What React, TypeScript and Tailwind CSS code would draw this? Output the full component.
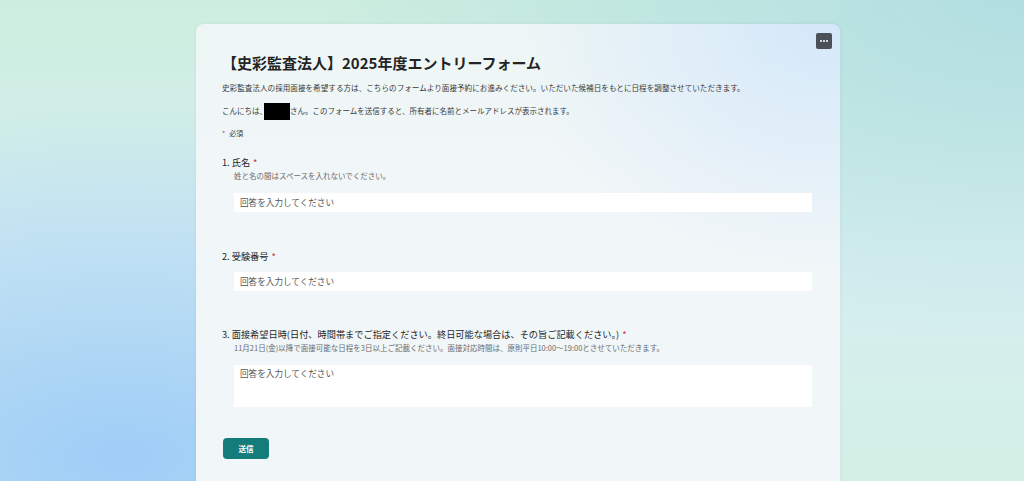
const FONT = "font-['Noto_Sans_CJK_JP','Noto_Sans',sans-serif]";

function Required() {
  return <span className="ml-[3px] text-[#c4314b]">*</span>;
}

function Question({
  no,
  label,
  hint,
  multiline = false,
  className = '',
}: {
  no: number;
  label: string;
  hint?: string;
  multiline?: boolean;
  className?: string;
}) {
  return (
    <div className={className}>
      <div className="text-[9.2px] leading-[14px] text-[#252525]">
        {no}. {label}
        <Required />
      </div>
      {hint && <div className="mt-[2px] pl-[12px] text-[7.5px] leading-[10px] text-[#6b6b6b]">{hint}</div>}
      <div
        className={`ml-[12px] bg-white px-[6px] text-[8.6px] text-[#555] ${
          multiline ? 'mt-[12px] h-[42px] pt-[2px] leading-[12px]' : 'mt-[9px] flex h-[19px] items-center'
        } ${hint ? '!mt-[12px]' : ''}`}
      >
        回答を入力してください
      </div>
    </div>
  );
}

export default function App() {
  return (
    <div
      className={`${FONT} h-[481px] overflow-hidden bg-[image:radial-gradient(ellipse_at_12%_95%,#9fcdf8,transparent_55%),radial-gradient(ellipse_at_100%_0%,#b2dee2,transparent_50%),linear-gradient(to_bottom,#cdeedf,#d7eef1_55%,#d3efe5)] pt-[24px]`}
    >
      <div className="relative ml-[196px] w-[644px] rounded-[8px] bg-[image:radial-gradient(ellipse_at_98%_0%,#d4e8fa,transparent_35%),linear-gradient(to_bottom,#eef6f5,#f1f6f8_30%)] pb-[60px] pl-[26px] pr-[28px] pt-[29px] shadow-[0_0_4px_rgba(0,0,0,0.06)]">
        <button className="absolute right-[8px] top-[9px] flex h-[16px] w-[16px] items-center justify-center gap-[1.5px] rounded-[2px] bg-[#4b5058]">
          <span className="h-[1.5px] w-[1.5px] rounded-full bg-white" />
          <span className="h-[1.5px] w-[1.5px] rounded-full bg-white" />
          <span className="h-[1.5px] w-[1.5px] rounded-full bg-white" />
        </button>

        <h1 className="text-[15px] font-bold leading-[20px] text-[#242424]">【史彩監査法人】2025年度エントリーフォーム</h1>
        <p className="mt-[9px] text-[7.6px] leading-[12px] text-[#3a3a3a]">
          史彩監査法人の採用面接を希望する方は、こちらのフォームより面接予約にお進みください。いただいた候補日をもとに日程を調整させていただきます。
        </p>
        <div className="mt-[8px] flex h-[18px] items-center text-[7.5px] text-[#3a3a3a]">
          <span>こんにちは、</span>
          <span className="-ml-[3px] inline-block h-[17px] w-[26px] bg-black" />
          <span>さん。このフォームを送信すると、所有者に名前とメールアドレスが表示されます。</span>
        </div>
        <div className="mt-[7px] text-[7px] leading-[12px] text-[#3a3a3a]">
          <span className="mr-[4px] text-[#c4314b]">*</span>必須
        </div>

        <Question no={1} label="氏名" hint="姓と名の間はスペースを入れないでください。" className="mt-[16px]" />
        <Question no={2} label="受験番号" className="mt-[37px]" />
        <Question
          no={3}
          label="面接希望日時(日付、時間帯までご指定ください。終日可能な場合は、その旨ご記載ください。)"
          hint="11月21日(金)以降で面接可能な日程を3日以上ご記載ください。面接対応時間は、原則平日10:00〜19:00とさせていただきます。"
          multiline
          className="mt-[36px]"
        />

        <button className="ml-[1px] mt-[31px] flex h-[21px] w-[46px] items-center justify-center rounded-[4px] bg-[#147c7b] text-[7.5px] font-bold text-white">
          送信
        </button>
      </div>
    </div>
  );
}
